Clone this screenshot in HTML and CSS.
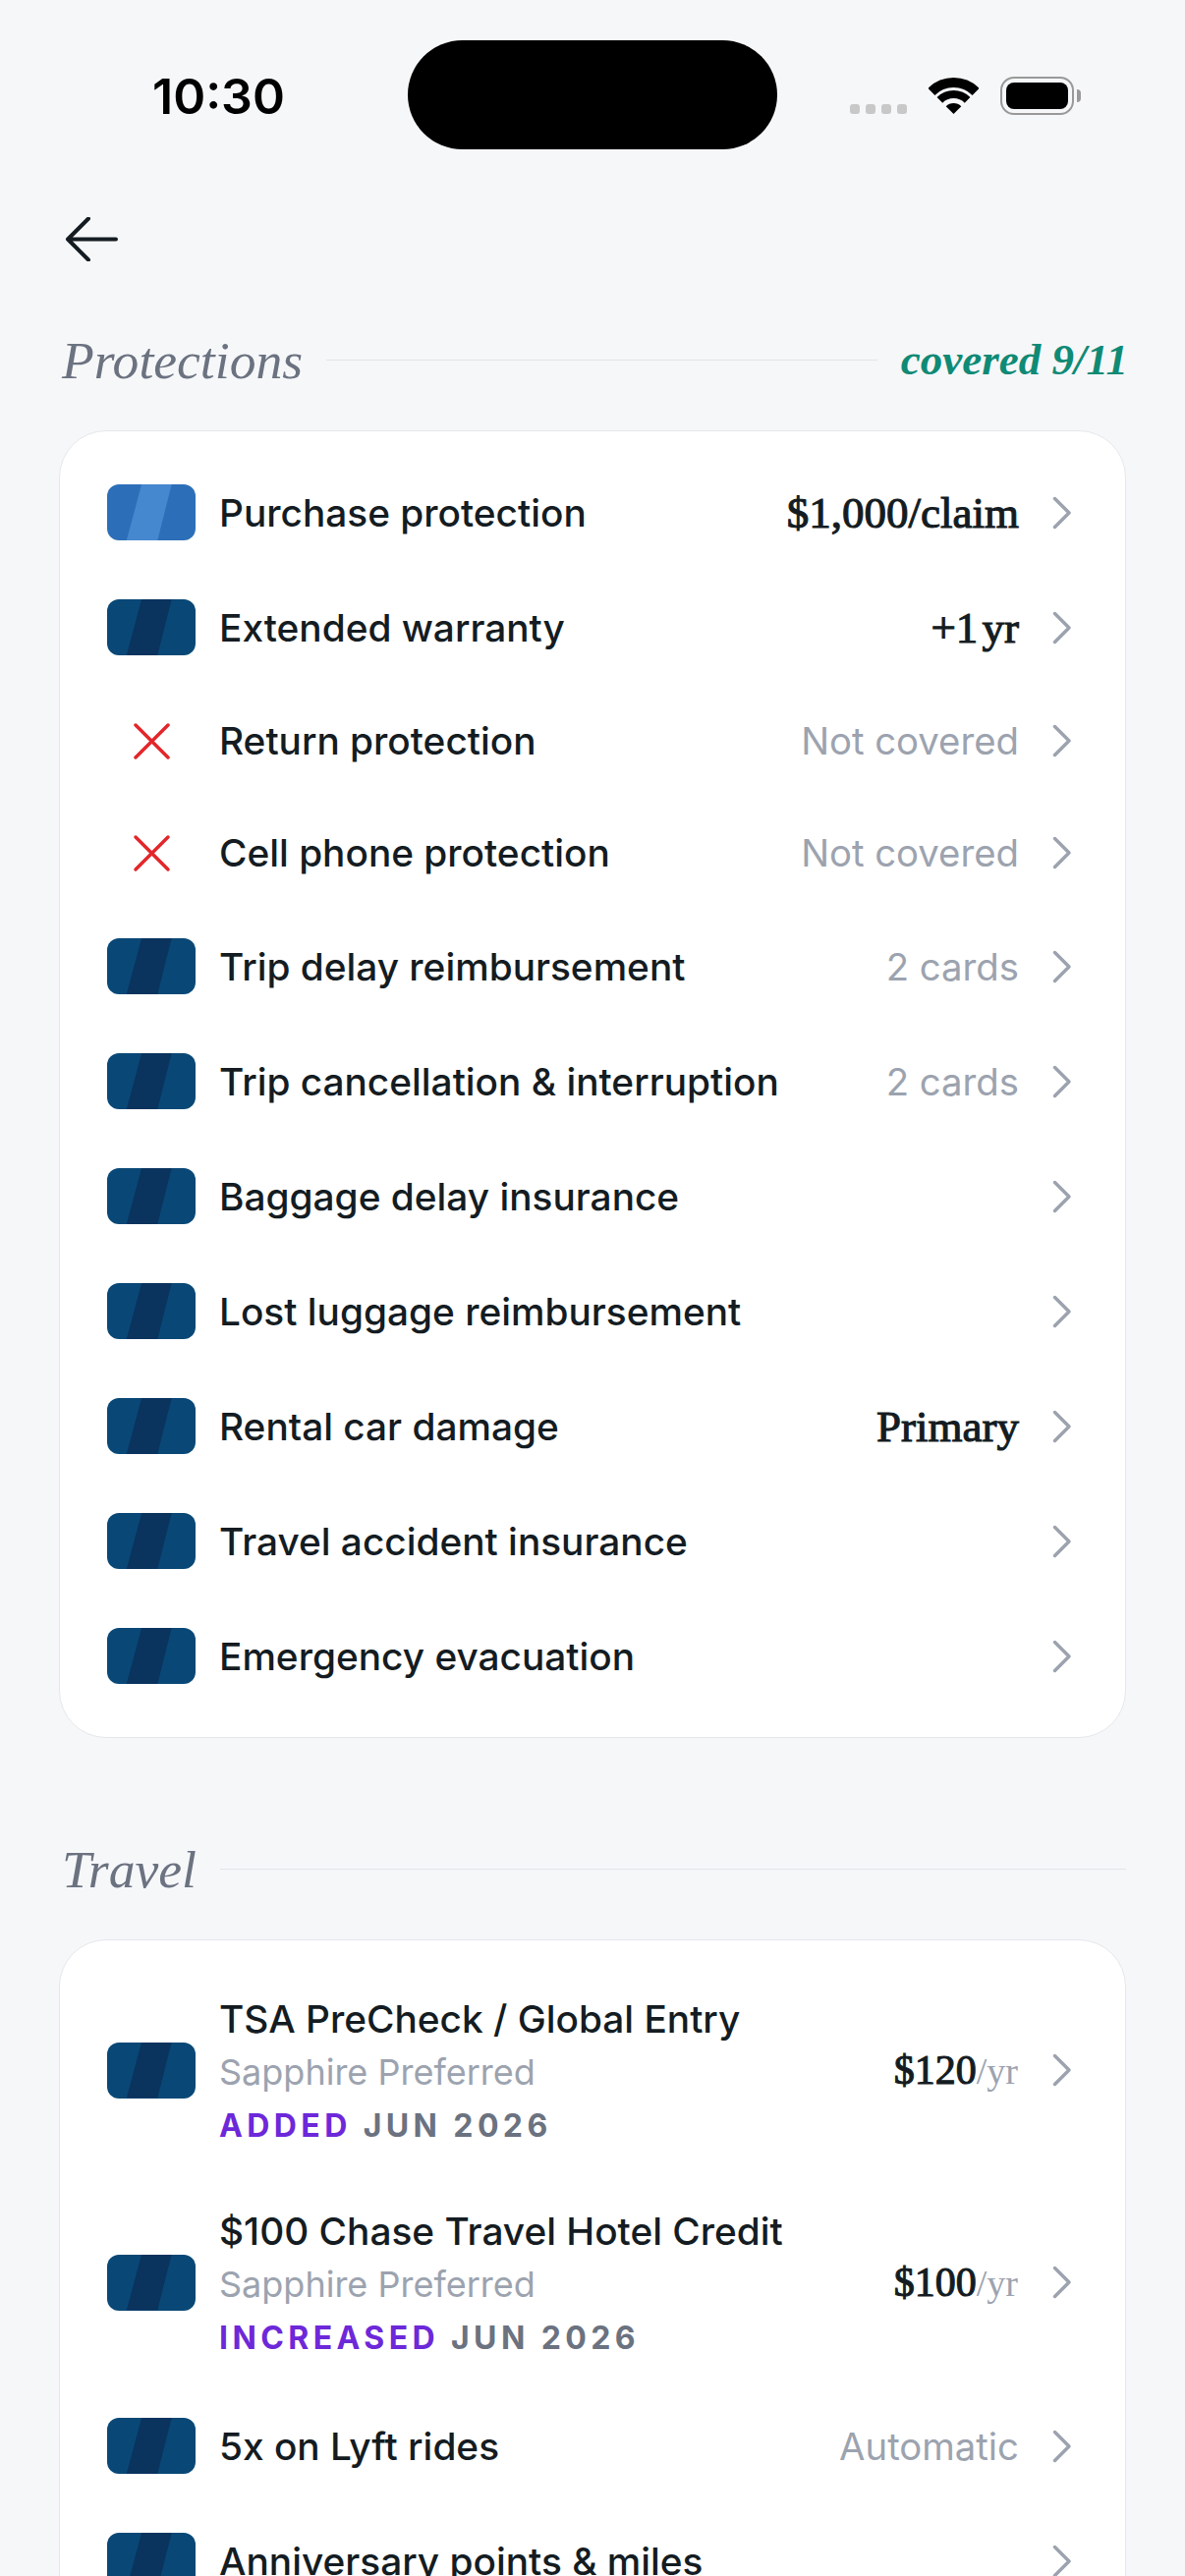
FILE: index.html
```html
<!DOCTYPE html>
<html lang="en">

<head>
    <meta charset="UTF-8">
    <meta name="viewport" content="width=device-width, initial-scale=1.0">
    <title>Card benefits</title>
    <link rel="stylesheet" href="styles.css">
</head>

<body>
    <div class="status">
        <div class="time">10:30</div>
        <div class="island"></div>
        <div class="status-icons">
            <div class="dots"><span></span><span></span><span></span><span></span></div>
            <svg class="wifi" width="51" height="37" viewBox="0 0 51 37">
                <path d="M2.9 14.4A32 32 0 0 1 48.1 14.4" fill="none" stroke="#000" stroke-width="10" />
                <path d="M11.4 22.9A20 20 0 0 1 39.6 22.9" fill="none" stroke="#000" stroke-width="8" />
                <path d="M25.5 37L17.7 29.2A11 11 0 0 1 33.3 29.2Z" fill="#000" />
            </svg>
            <div class="battery"><div class="battery-fill"></div></div>
            <div class="battery-cap"></div>
        </div>
    </div>

    <svg class="back" width="54" height="45" viewBox="0 0 54 45">
        <path d="M52 22.5H3M24 1.5L3 22.5L24 43.5" fill="none" stroke="#141c22" stroke-width="4" stroke-linecap="round" stroke-linejoin="round" />
    </svg>

    <div class="section-head first">
        <span class="section-title">Protections</span>
        <span class="section-line"></span>
        <span class="section-count">covered 9/11</span>
    </div>

    <div class="card">
        <div class="row">
            <span class="chip light"></span>
            <span class="title">Purchase protection</span>
            <span class="value">$1,000/claim</span>
            <svg class="chev" width="54" height="54" viewBox="0 0 54 54"><path d="M30.5 12.5L45 27L30.5 41.5" /></svg>
        </div>
        <div class="row">
            <span class="chip"></span>
            <span class="title">Extended warranty</span>
            <span class="value">+1 yr</span>
            <svg class="chev" width="54" height="54" viewBox="0 0 54 54"><path d="M30.5 12.5L45 27L30.5 41.5" /></svg>
        </div>
        <div class="row">
            <span class="no-chip"><svg width="39" height="39" viewBox="0 0 39 39"><path d="M3 3L36 36M36 3L3 36" /></svg></span>
            <span class="title">Return protection</span>
            <span class="muted">Not covered</span>
            <svg class="chev" width="54" height="54" viewBox="0 0 54 54"><path d="M30.5 12.5L45 27L30.5 41.5" /></svg>
        </div>
        <div class="row">
            <span class="no-chip"><svg width="39" height="39" viewBox="0 0 39 39"><path d="M3 3L36 36M36 3L3 36" /></svg></span>
            <span class="title">Cell phone protection</span>
            <span class="muted">Not covered</span>
            <svg class="chev" width="54" height="54" viewBox="0 0 54 54"><path d="M30.5 12.5L45 27L30.5 41.5" /></svg>
        </div>
        <div class="row">
            <span class="chip"></span>
            <span class="title">Trip delay reimbursement</span>
            <span class="muted">2 cards</span>
            <svg class="chev" width="54" height="54" viewBox="0 0 54 54"><path d="M30.5 12.5L45 27L30.5 41.5" /></svg>
        </div>
        <div class="row">
            <span class="chip"></span>
            <span class="title">Trip cancellation &amp; interruption</span>
            <span class="muted">2 cards</span>
            <svg class="chev" width="54" height="54" viewBox="0 0 54 54"><path d="M30.5 12.5L45 27L30.5 41.5" /></svg>
        </div>
        <div class="row">
            <span class="chip"></span>
            <span class="title">Baggage delay insurance</span>
            <svg class="chev" width="54" height="54" viewBox="0 0 54 54"><path d="M30.5 12.5L45 27L30.5 41.5" /></svg>
        </div>
        <div class="row">
            <span class="chip"></span>
            <span class="title">Lost luggage reimbursement</span>
            <svg class="chev" width="54" height="54" viewBox="0 0 54 54"><path d="M30.5 12.5L45 27L30.5 41.5" /></svg>
        </div>
        <div class="row">
            <span class="chip"></span>
            <span class="title">Rental car damage</span>
            <span class="value">Primary</span>
            <svg class="chev" width="54" height="54" viewBox="0 0 54 54"><path d="M30.5 12.5L45 27L30.5 41.5" /></svg>
        </div>
        <div class="row">
            <span class="chip"></span>
            <span class="title">Travel accident insurance</span>
            <svg class="chev" width="54" height="54" viewBox="0 0 54 54"><path d="M30.5 12.5L45 27L30.5 41.5" /></svg>
        </div>
        <div class="row">
            <span class="chip"></span>
            <span class="title">Emergency evacuation</span>
            <svg class="chev" width="54" height="54" viewBox="0 0 54 54"><path d="M30.5 12.5L45 27L30.5 41.5" /></svg>
        </div>
    </div>

    <div class="section-head">
        <span class="section-title">Travel</span>
        <span class="section-line"></span>
    </div>

    <div class="card">
        <div class="row tall">
            <span class="chip"></span>
            <div class="stack">
                <div class="title">TSA PreCheck / Global Entry</div>
                <div class="sub">Sapphire Preferred</div>
                <div class="tag"><span class="tag-accent">ADDED</span> JUN 2026</div>
            </div>
            <span class="value small">$120<span class="per">/yr</span></span>
            <svg class="chev" width="54" height="54" viewBox="0 0 54 54"><path d="M30.5 12.5L45 27L30.5 41.5" /></svg>
        </div>
        <div class="row tall">
            <span class="chip"></span>
            <div class="stack">
                <div class="title">$100 Chase Travel Hotel Credit</div>
                <div class="sub">Sapphire Preferred</div>
                <div class="tag"><span class="tag-accent">INCREASED</span> JUN 2026</div>
            </div>
            <span class="value small">$100<span class="per">/yr</span></span>
            <svg class="chev" width="54" height="54" viewBox="0 0 54 54"><path d="M30.5 12.5L45 27L30.5 41.5" /></svg>
        </div>
        <div class="row">
            <span class="chip"></span>
            <span class="title">5x on Lyft rides</span>
            <span class="muted">Automatic</span>
            <svg class="chev" width="54" height="54" viewBox="0 0 54 54"><path d="M30.5 12.5L45 27L30.5 41.5" /></svg>
        </div>
        <div class="row">
            <span class="chip"></span>
            <span class="title">Anniversary points &amp; miles</span>
            <svg class="chev" width="54" height="54" viewBox="0 0 54 54"><path d="M30.5 12.5L45 27L30.5 41.5" /></svg>
        </div>
    </div>
</body>

</html>
```

FILE: styles.css
```css
html {
    height: 2622px;
    overflow: hidden;
}

body {
    margin: 0;
    padding: 0 60px;
    height: 2622px;
    overflow: hidden;
    box-sizing: border-box;
    background: #f6f7f9;
    font-family: Inter, "Liberation Sans", sans-serif;
    color: #141c22;
}

.status {
    display: flex;
    align-items: center;
    height: 111px;
    padding-top: 41px;
}

.time {
    width: 355px;
    padding-left: 95px;
    box-sizing: border-box;
    margin-top: 2px;
    font-size: 50px;
    font-weight: 600;
    color: #000;
}

.island {
    width: 376px;
    height: 111px;
    border-radius: 56px;
    background: #000;
}

.status-icons {
    display: flex;
    align-items: center;
    margin-left: 74px;
    margin-top: 2px;
}

.dots {
    display: flex;
    gap: 6px;
    margin-top: 27px;
    margin-right: 22px;
}

.dots span {
    width: 10px;
    height: 10px;
    border-radius: 3px;
    background: #c8c8c8;
}

.wifi {
    margin-right: 22px;
}

.battery {
    width: 75px;
    height: 39px;
    padding: 4px;
    box-sizing: border-box;
    border: 2.5px solid #999;
    border-radius: 14px;
}

.battery-fill {
    height: 100%;
    border-radius: 8px;
    background: #000;
}

.battery-cap {
    width: 4px;
    height: 13px;
    margin-left: 3px;
    border-radius: 0 4px 4px 0;
    background: #999;
}

.back {
    display: block;
    margin: 69px 0 0 6px;
}

.section-head {
    display: flex;
    align-items: center;
    gap: 24px;
    height: 60px;
    margin-top: 103px;
    margin-bottom: 42px;
}

.section-head.first {
    margin-top: 70px;
}

.section-title {
    padding-left: 3px;
    padding-top: 2px;
    font-family: "Liberation Serif", serif;
    font-style: italic;
    font-size: 53.6px;
    color: #6b7280;
}

.section-line {
    flex: 1;
    height: 1px;
    background: #e2e4e9;
}

.section-count {
    margin-right: -2px;
    font-family: "Liberation Serif", serif;
    font-style: italic;
    font-weight: 700;
    font-size: 45px;
    color: #0f8a75;
}

.card {
    padding: 24px 48px;
    border: 1px solid #e5e7eb;
    border-radius: 48px;
    background: #fff;
}

.row {
    display: flex;
    align-items: center;
    padding: 30px 0;
}

.row.tall {
    padding: 0;
    height: 216px;
}

.chip {
    position: relative;
    flex: none;
    width: 90px;
    height: 57px;
    margin-right: 24px;
    border-radius: 12px;
    overflow: hidden;
    background: #094876;
}

/* the diagonal band on the card art */
.chip::after {
    content: "";
    position: absolute;
    top: 0;
    left: 0;
    width: 100%;
    height: 100%;
    background: #0a335e;
    clip-path: polygon(39% 0, 73% 0, 57% 100%, 22% 100%);
}

.chip.light {
    background: #2c6fb8;
}

.chip.light::after {
    background: #4688cf;
}

.no-chip {
    flex: none;
    display: flex;
    justify-content: center;
    width: 90px;
    margin-right: 24px;
}

.no-chip path {
    fill: none;
    stroke: #e3262b;
    stroke-width: 3.5;
    stroke-linecap: round;
}

.title {
    font-size: 38.8px;
    line-height: 54px;
    font-weight: 500;
    color: #141c22;
}

.stack {
    display: flex;
    flex-direction: column;
    margin-top: 4px;
}

.sub {
    font-size: 36px;
    line-height: 54px;
    color: #9ca3af;
}

.tag {
    margin-top: 1px;
    font-size: 32px;
    line-height: 54px;
    font-weight: 700;
    letter-spacing: 4.4px;
    color: #6b7280;
}

.tag-accent {
    color: #6d28d9;
}

.value {
    margin-left: auto;
    font-family: "Liberation Serif", serif;
    font-size: 45px;
    line-height: 54px;
    word-spacing: -7px;
    -webkit-text-stroke: 1.1px #141c22;
    color: #141c22;
}

.value.small {
    margin-right: 1px;
    font-size: 42px;
}

.per {
    font-size: 38px;
    -webkit-text-stroke: 0;
    color: #9ca3af;
}

.muted {
    margin-left: auto;
    font-size: 38.3px;
    line-height: 54px;
    color: #9ca3af;
}

.chev {
    flex: none;
    margin-left: 6px;
}

.row > .title + .chev {
    margin-left: auto;
}

.chev path {
    fill: none;
    stroke: #9ca3af;
    stroke-width: 3.5;
    stroke-linecap: round;
    stroke-linejoin: round;
}
```
